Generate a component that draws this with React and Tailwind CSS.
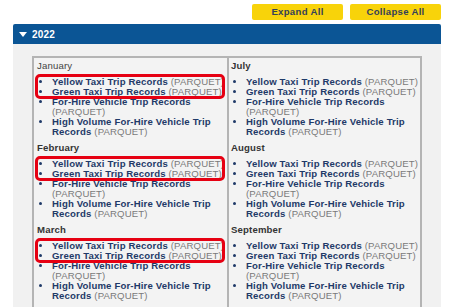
import React from "react";

const items = [
  { name: "Yellow Taxi Trip Records", nowrap: true },
  { name: "Green Taxi Trip Records", nowrap: true },
  { name: "For-Hire Vehicle Trip Records" },
  { name: "High Volume For-Hire Vehicle Trip Records" },
];

function Month({ label, bold = true, highlight = false, first = false }) {
  return (
    <div className={first ? "" : "mt-[6px]"}>
      <p
        className={`leading-[10px] text-[9.6px] tracking-[0.15px] ${
          bold ? "font-bold text-[#333]" : "font-normal text-[#444]"
        }`}
      >
        {label}
      </p>
      <ul className="relative mt-[6px] list-disc pl-[15px] marker:text-[#1f3a68]">
        {highlight && (
          <div className="absolute left-[-2px] top-[-3px] h-[25px] w-[190px] rounded-[5px] border-[3px] border-[#e60012]" />
        )}
        {items.map((it) => (
          <li
            key={it.name}
            className={`leading-[10px] text-[9.6px] tracking-[0.15px] ${
              it.nowrap ? "whitespace-nowrap" : ""
            }`}
          >
            <a className="font-bold text-[#1f3a68]">{it.name}</a>{" "}
            <span className="text-[#7a7a7a]">(PARQUET)</span>
          </li>
        ))}
      </ul>
    </div>
  );
}

export default function App() {
  return (
    <div
      className="h-[307px] w-[450px] overflow-hidden bg-white"
      style={{ fontFamily: '"Liberation Sans", Arial, sans-serif' }}
    >
      <div className="flex justify-end gap-[7px] pr-[9px] pt-[4px]">
        <button className="h-[16px] w-[91px] rounded-[2px] bg-[#f8d30a] text-[9.6px] font-bold tracking-[0.3px] text-[#34405a]">
          Expand All
        </button>
        <button className="h-[16px] w-[91px] rounded-[2px] bg-[#f8d30a] text-[9.6px] font-bold tracking-[0.3px] text-[#34405a]">
          Collapse All
        </button>
      </div>

      <div className="ml-[13px] mr-[9px] mt-[4px]">
        <div className="flex h-[20px] items-center gap-[5px] rounded-t-[2px] bg-[#0b5595] pl-[6px] text-white">
          <svg width="8" height="5" viewBox="0 0 8 5">
            <polygon points="0,0 8,0 4,5" fill="white" />
          </svg>
          <span className="text-[10px] font-bold tracking-[0.2px]">2022</span>
        </div>

        <div className="bg-[#f1f1f1] px-[19px] pt-[12px] pb-[20px]">
          <div className="grid grid-cols-2 border-2 border-[#b4b4b4] bg-[#f3f3f3]">
            <div className="pl-[3px] pt-[3px] pb-[8px]">
              <Month label="January" bold={false} highlight first />
              <Month label="February" highlight />
              <Month label="March" highlight />
            </div>
            <div className="border-l-2 border-[#b4b4b4] pl-[2px] pt-[3px] pb-[8px]">
              <Month label="July" first />
              <Month label="August" />
              <Month label="September" />
            </div>
          </div>
        </div>
      </div>
    </div>
  );
}
